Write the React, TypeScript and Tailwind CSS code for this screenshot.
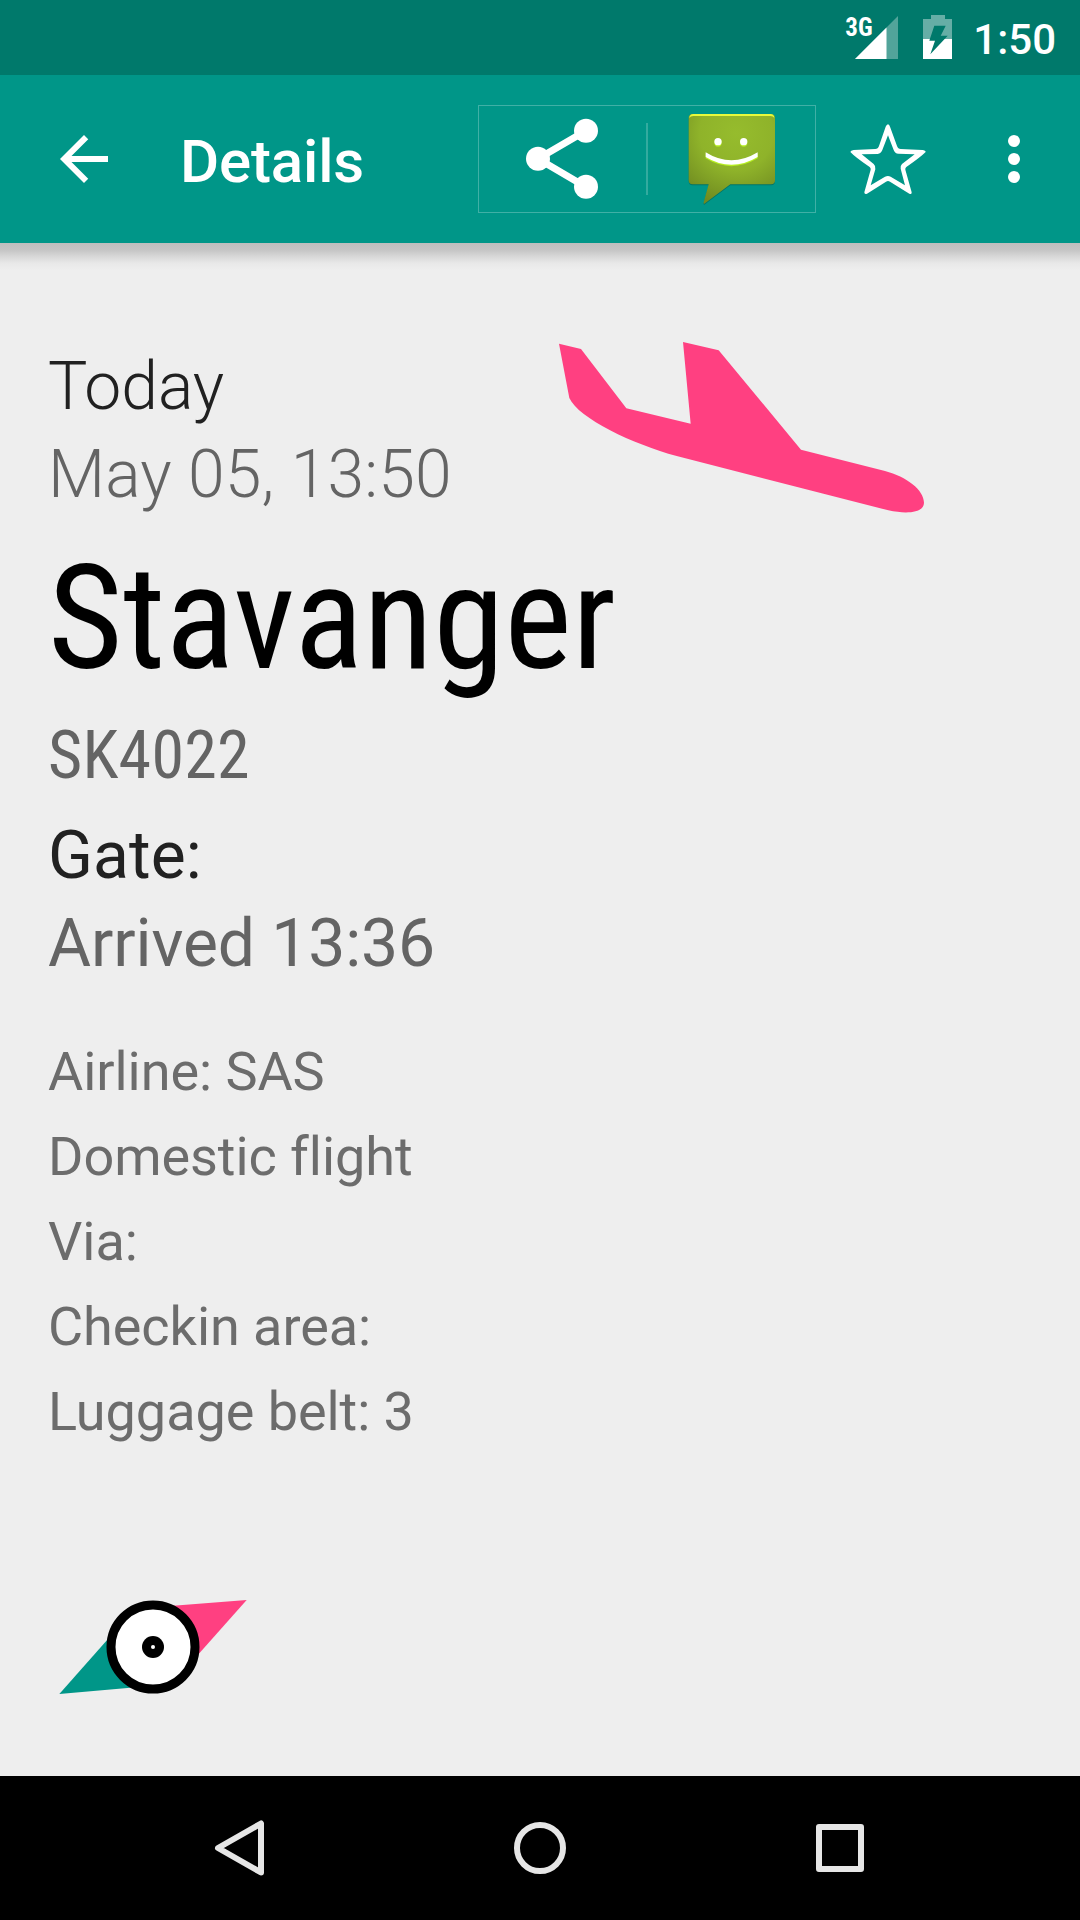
import type { ReactNode } from "react";

const facts = [
  "Airline: SAS",
  "Domestic flight",
  "Via:",
  "Checkin area:",
  "Luggage belt: 3",
];

function StatusBar() {
  return (
    <div className="flex h-[75px] shrink-0 items-start justify-end bg-[#00796b] pr-[24px] text-white">
      <div className="relative mt-[15px] h-[45px] w-[56px]">
        <svg className="absolute inset-0" width="56" height="45" viewBox="843 15 56 45">
          <path d="M898 16V59H855Z" fill="#fff" fillOpacity="0.32" />
          <path d="M886.5 27.5V59H855Z" fill="#fff" />
        </svg>
        <span className="absolute top-0 left-[2px] font-['Roboto_Condensed'] text-[25px] leading-[25px] font-bold">
          3G
        </span>
      </div>
      <svg className="mt-[15px] ml-[24px]" width="29" height="44" viewBox="923 15 29 44">
        <mask id="bolt">
          <rect x="923" y="15" width="29" height="44" fill="#fff" />
          <path d="M932.7 40.7H929.3L934.3 25.7H945.7L940.7 35.8H947.7L930.3 54.3L935 40.7Z" fill="#000" />
        </mask>
        <g mask="url(#bolt)">
          <path d="M931 15h14v4h7v20h-29v-20h8z" fill="#fff" fillOpacity="0.4" />
          <rect x="923" y="39" width="29" height="20" fill="#fff" />
        </g>
      </svg>
      <span className="mt-[15px] ml-[21px] text-[42px] leading-[49px] font-medium">1:50</span>
    </div>
  );
}

function ShareIcon() {
  return (
    <svg width="167" height="106" viewBox="27 33 501 318">
      <path d="M348 107L204 191L348 276" fill="none" stroke="#fff" strokeWidth="21" />
      <circle cx="348" cy="107.500" r="36" fill="#fff" />
      <circle cx="204" cy="191" r="36" fill="#fff" />
      <circle cx="348" cy="275.500" r="36" fill="#fff" />
    </svg>
  );
}

function MessageIcon() {
  const bubble =
    "M669 57H904Q916 57 916 69V256Q916 268 904 268H782L704 326Q701 327 702 322L717 268H669Q657 268 657 256V69Q657 57 669 57Z";
  return (
    <svg width="167" height="106" viewBox="535 33 501 318">
      <defs>
        <radialGradient id="bubble" gradientUnits="userSpaceOnUse" cx="800" cy="115" r="220">
          <stop offset="0" stopColor="#96bc2d" />
          <stop offset="0.5" stopColor="#8fb32a" />
          <stop offset="1" stopColor="#6f8a20" />
        </radialGradient>
      </defs>
      <path d={bubble} fill="#005a50" fillOpacity="0.55" transform="translate(0 3)" />
      <path d={bubble} fill="url(#bubble)" />
      <path d="M659 69Q660 57 671 57H902Q913 57 914 69Q911 63 902 63H671Q662 63 659 69Z" fill="#e6fa3c" />
      <g fill="#b5ee20">
        <circle cx="745" cy="144" r="11" />
        <circle cx="822" cy="144" r="11" />
        <path d="M708 176Q785 222 864 176V190Q785 237 708 190Z" />
      </g>
      <g fill="#fff">
        <circle cx="745" cy="140" r="11" />
        <circle cx="822" cy="140" r="11" />
        <path d="M708 172Q785 220 864 172V186Q785 233 708 186Z" />
      </g>
    </svg>
  );
}

function StarIcon() {
  return (
    <svg width="78" height="72" viewBox="86 69 234 216">
      <path
        fill="#fff"
        fillRule="evenodd"
        d="M203 73Q207 74 209 80L230 138Q233 147 241 147L306 150Q316 151 316 156Q300 172 258 201Q254 204 255 209L274 277Q275 284 267 281L209 245Q203 241 197 245L140 281Q132 284 132 277L151 209Q152 204 148 201Q105 172 90 156Q91 151 100 150L165 147Q173 147 176 138L196 80Q199 74 203 73ZM203 106L220 150Q224 161 234 161L283 163L245 192Q239 198 241 206L254 256L211 230Q203 226 194 230L151 256L165 208Q167 198 160 192L124 163L172 162Q182 161 186 150Z"
      />
    </svg>
  );
}

function AppBar() {
  return (
    <header className="relative flex h-[168px] shrink-0 items-center bg-[#009688] text-white">
      <svg className="ml-[48px]" width="72" height="72" viewBox="0 0 24 24" fill="#fff">
        <path d="M20 11H7.83l5.59-5.59L12 4l-8 8 8 8 1.41-1.41L7.83 13H20v-2z" />
      </svg>
      <h1 className="ml-[60px] pt-[6px] text-[60px] leading-[70px] font-medium tracking-[-0.15px]">Details</h1>
      <div className="ml-auto flex h-[108px] w-[338px] items-center border border-white/25">
        <ShareIcon />
        <div className="h-[72px] w-[2px] bg-white/20" />
        <MessageIcon />
      </div>
      <div className="flex w-[144px] items-center justify-center">
        <StarIcon />
      </div>
      <svg className="mr-[30px] ml-[18px]" width="72" height="72" viewBox="0 0 24 24" fill="#fff">
        <circle cx="12" cy="6" r="2" />
        <circle cx="12" cy="12" r="2" />
        <circle cx="12" cy="18" r="2" />
      </svg>
      <div className="absolute top-full left-0 h-[27px] w-full bg-[linear-gradient(to_bottom,#bebebe_0px,#c5c5c5_7px,#d9d9d9_14px,#e8e8e8_20px,#eeeeee_27px)]" />
    </header>
  );
}

function Plane() {
  return (
    <svg className="shrink-0" width="400" height="210" viewBox="0 0 1200 630">
      <path
        fill="#ff4081"
        d="M57 71L123 87L259 265L452 311L429 66L536 91L783 389L1035 453C1100 470 1152 510 1152 548C1152 577 1105 584 1045 571L410 408C280 373 115 295 88 234Z"
      />
    </svg>
  );
}

function Compass() {
  return (
    <svg className="mt-[116px]" width="222" height="150" viewBox="54 0 666 450">
      <path d="M650 90L420 108L369 231L500 259Z" fill="#ff4081" />
      <path d="M88 372L318 352L369 231L240 200Z" fill="#009688" />
      <circle cx="369" cy="231" r="126" fill="#fff" stroke="#000" strokeWidth="27" />
      <circle cx="369" cy="231" r="33" fill="#000" />
      <circle cx="369" cy="231" r="6" fill="#fff" />
    </svg>
  );
}

function Line({ children, className }: { children: ReactNode; className: string }) {
  return <p className={`text-[66px] leading-[88px] whitespace-nowrap ${className}`}>{children}</p>;
}

function NavBar() {
  return (
    <nav className="flex h-[144px] shrink-0 items-center justify-center gap-[228px] bg-black">
      <svg width="72" height="72" viewBox="0 0 72 72" fill="none" stroke="#e6e6e6" strokeWidth="6" strokeLinejoin="round">
        <path d="M57 11.500V60.500L14 36Z" />
      </svg>
      <svg width="72" height="72" viewBox="0 0 72 72" fill="none" stroke="#e6e6e6" strokeWidth="6">
        <circle cx="36" cy="36" r="23" />
      </svg>
      <svg width="72" height="72" viewBox="0 0 72 72" fill="none" stroke="#e6e6e6" strokeWidth="6" strokeLinejoin="round">
        <rect x="15" y="15" width="42" height="42" />
      </svg>
    </nav>
  );
}

export default function App() {
  return (
    <div className="flex h-[1920px] w-[1080px] flex-col overflow-hidden bg-[#eeeeee] font-['Roboto',sans-serif] [font-variant-ligatures:none]">
      <StatusBar />
      <AppBar />
      <main className="flex flex-1 flex-col items-start pt-[77px] pl-[48px]">
        <div className="flex h-[210px]">
          <div className="w-[492px] pt-[23px]">
            <Line className="font-light text-[#212121]">Today</Line>
            <Line className="font-light tracking-[0.15px] text-[#646464]">May 05, 13:50</Line>
          </div>
          <Plane />
        </div>
        <h2 className="mt-[4px] font-['Roboto_Condensed'] text-[144px] leading-[170px] tracking-[0.12px] text-black">
          Stavanger
        </h2>
        <Line className="mt-[8px] font-['Roboto_Condensed'] tracking-[0.2px] text-[#646464]">SK4022</Line>
        <Line className="mt-[12px] tracking-[0.1px] text-[#212121]">Gate:</Line>
        <Line className="tracking-[-0.1px] text-[#646464]">Arrived 13:36</Line>
        <ul className="mt-[41px] text-[54px] leading-[85px] tracking-[-0.05px] text-[#6c6c6c]">
          {facts.map((fact) => (
            <li key={fact}>{fact}</li>
          ))}
        </ul>
        <Compass />
      </main>
      <NavBar />
    </div>
  );
}
